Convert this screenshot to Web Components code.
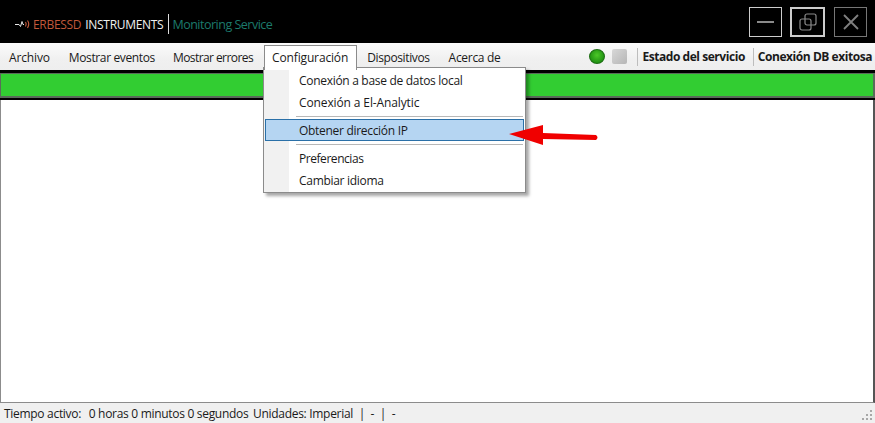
<!DOCTYPE html>
<html lang="es">
<head>
<meta charset="utf-8">
<title>Monitoring Service</title>
<style>
  html, body { margin: 0; padding: 0; background: #fff; }
  body { font-family: "Open Sans", "Noto Sans", sans-serif; font-size: 12px; letter-spacing: -0.3px; overflow: hidden; }
</style>
</head>
<body>
<monitor-app></monitor-app>

<script>
// barra de título
class TitleBar extends HTMLElement {
  constructor() {
    super();
    this.attachShadow({ mode: 'open' });
    this.shadowRoot.innerHTML = `
      <style>
        :host { display: flex; align-items: center; height: 43px; background: #000; padding: 5px 8px 0 15px; box-sizing: border-box; }
        .logo { display: flex; align-items: center; font-size: 12px; flex: 1; }
        .logo svg { margin-right: 2px; }
        .brand { color: #c2583a; }
        .inst { color: #f0f0f0; margin-left: 4px; }
        .divider { width: 1px; height: 20px; background: #ddd; margin: 0 3px 0 5px; }
        .service { color: #1c7a6c; font-size: 12.5px; letter-spacing: -0.5px; }
        .btns { display: flex; margin-top: -4px; }
        .btn { width: 33px; height: 30px; box-sizing: border-box; border: 1px solid #ccc; display: flex; align-items: center; justify-content: center; }
        .btn.restore { border: 2px solid #ccc; width: 35px; margin: 0 9px 0 8px; }
        .btn.close { border-color: #777; }
      </style>
      <div class="logo">
        <svg width="16" height="10" viewBox="0 0 16 10" fill="none">
          <path d="M0 5.5H4L5.5 7.5L7 2.5L8 5.5H9" stroke="#e8e8e8" stroke-width="1"/>
          <path d="M10.5 3Q12 5 10.5 7.5M12.5 1.5Q15 5 12.5 9" stroke="#c2583a" stroke-width="1.2"/>
        </svg>
        <span class="brand">ERBESSD</span>
        <span class="inst">INSTRUMENTS</span>
        <span class="divider"></span>
        <span class="service">Monitoring Service</span>
      </div>
      <div class="btns">
        <div class="btn">
          <svg width="17" height="4" viewBox="0 0 17 4"><rect y="1" width="17" height="2" fill="#8a8a8a"/></svg>
        </div>
        <div class="btn restore">
          <svg width="18" height="18" viewBox="0 0 18 18" fill="none" stroke="#8a8a8a" stroke-width="1.2">
            <rect x="6" y="1" width="11" height="11" rx="2"/>
            <rect x="1" y="6" width="11" height="11" rx="2"/>
          </svg>
        </div>
        <div class="btn close">
          <svg width="16" height="16" viewBox="0 0 16 16" fill="none" stroke="#808080" stroke-width="1.8">
            <path d="M1 1L15 15M15 1L1 15"/>
          </svg>
        </div>
      </div>
    `;
  }
}

// barra de menú
class MenuBar extends HTMLElement {
  constructor() {
    super();
    this.attachShadow({ mode: 'open' });
    this.shadowRoot.innerHTML = `
      <style>
        :host { display: flex; align-items: stretch; height: 27px; background: linear-gradient(#fbfbfb, #f0f0f0 60%, #eeeeee); color: #1a1a1a; font-size: 12px; box-sizing: border-box; padding: 2px 3px 0 1px; }
        .items { display: flex; flex: 1; }
        .status { display: flex; align-items: center; font-weight: 700; font-size: 12px; height: 23px; letter-spacing: -0.45px; }
        .led { width: 16px; height: 15px; border-radius: 50%; background: radial-gradient(circle at 50% 40%, #4cc828, #1f8f12 75%); border: 1px solid #1c6d12; box-sizing: border-box; margin-right: 7px; }
        .stop { width: 15px; height: 15px; background: linear-gradient(135deg, #d8d8d8, #b6b6b6); border-radius: 2px; margin-right: 10px; }
        .sep { width: 1px; height: 18px; background: #bdbdbd; margin-right: 4px; }
        .sep.second { margin-left: 8px; }
      </style>
      <div class="items"><slot></slot></div>
      <div class="status">
        <span class="led"></span>
        <span class="stop"></span>
        <span class="sep"></span>
        <span>Estado del servicio</span>
        <span class="sep second"></span>
        <span>Conexión DB exitosa</span>
      </div>
    `;
  }
}

class MenuItem extends HTMLElement {
  constructor() {
    super();
    this.attachShadow({ mode: 'open' });
    this.shadowRoot.innerHTML = `
      <style>
        :host { display: flex; align-items: center; box-sizing: border-box; height: 23px; margin-top: 1px; padding: 0 8px; margin-right: 3px; white-space: nowrap; }
        :host([open]) { background: #fff; border: 1px solid #8b8b8b; border-bottom: 0; height: 25px; margin-top: 0; padding: 0 8px 2px 7px; margin-right: 2px; position: relative; z-index: 3; }
      </style>
      <slot></slot>
    `;
  }
}

// menú desplegable
class DropMenu extends HTMLElement {
  constructor() {
    super();
    this.attachShadow({ mode: 'open' });
    this.shadowRoot.innerHTML = `
      <style>
        :host { display: block; position: absolute; left: 263px; top: 67px; width: 263px; height: 126px; box-sizing: border-box; background: linear-gradient(90deg, #f1f1f1 0, #f1f1f1 25px, #fff 25px); border: 1px solid #8b8b8b; box-shadow: 3px 3px 3px rgba(0,0,0,.35); padding: 1px 1px; z-index: 2; font-size: 12px; color: #1a1a1a; }
      </style>
      <slot></slot>
    `;
  }
}

class DropItem extends HTMLElement {
  constructor() {
    super();
    this.attachShadow({ mode: 'open' });
    this.shadowRoot.innerHTML = `
      <style>
        :host { display: flex; align-items: center; height: 22px; box-sizing: border-box; padding-left: 34px; white-space: nowrap; }
        :host([active]) { background: #b5d5f2; border: 1px solid #2a70a8; padding-left: 33px; }
      </style>
      <slot></slot>
    `;
  }
}

class DropSep extends HTMLElement {
  constructor() {
    super();
    this.attachShadow({ mode: 'open' });
    this.shadowRoot.innerHTML = `
      <style>
        :host { display: block; height: 1px; margin: 3px 1px 2px 31px; background: #b8b8b8; }
      </style>
    `;
  }
}

class StatusBar extends HTMLElement {
  constructor() {
    super();
    this.attachShadow({ mode: 'open' });
    this.shadowRoot.innerHTML = `
      <style>
        :host { display: flex; align-items: center; height: 20px; background: #f0f0f0; color: #1a1a1a; font-size: 12px; padding-left: 4px; box-sizing: border-box; position: relative; }
        .text { white-space: pre; }
        svg { position: absolute; right: 2px; bottom: 2px; }
      </style>
      <span class="text"><slot></slot></span>
      <svg width="12" height="12" viewBox="0 0 12 12" fill="#a8a8a8">
        <rect x="9" y="1" width="2" height="2"/>
        <rect x="5" y="5" width="2" height="2"/><rect x="9" y="5" width="2" height="2"/>
        <rect x="1" y="9" width="2" height="2"/><rect x="5" y="9" width="2" height="2"/><rect x="9" y="9" width="2" height="2"/>
      </svg>
    `;
  }
}

class MonitorApp extends HTMLElement {
  constructor() {
    super();
    this.attachShadow({ mode: 'open' });
    this.shadowRoot.innerHTML = `
      <style>
        :host { display: flex; flex-direction: column; width: 875px; height: 423px; position: relative; overflow: hidden; }
        .strip { height: 30px; background: #000; padding: 3px 0 2px; box-sizing: border-box; flex: none; }
        .green { height: 100%; background: #32cd32; border: 2px solid #5a6b5a; border-width: 1px 2px 2px 1px; box-sizing: border-box; }
        .content { flex: 1; background: #fff; border: 1px solid #8c8c8c; border-top: 0; border-right: 2px solid #555; }
        .arrow { position: absolute; left: 508px; top: 122px; z-index: 4; }
      </style>
      <title-bar></title-bar>
      <menu-bar>
        <menu-item style="letter-spacing:-0.15px">Archivo</menu-item>
        <menu-item style="letter-spacing:-0.37px;margin-right:2px">Mostrar eventos</menu-item>
        <menu-item style="letter-spacing:-0.57px">Mostrar errores</menu-item>
        <menu-item open style="letter-spacing:-0.15px">Configuración</menu-item>
        <menu-item style="letter-spacing:-0.38px">Dispositivos</menu-item>
        <menu-item>Acerca de</menu-item>
      </menu-bar>
      <div class="strip"><div class="green"></div></div>
      <div class="content"></div>
      <status-bar>Tiempo activo:  <span style="margin-left:2px">0 horas 0 minutos 0 segundos</span>  <span style="margin-left:-1px">Unidades: Imperial  |  -  |  -</span></status-bar>
      <drop-menu>
        <drop-item>Conexión a base de datos local</drop-item>
        <drop-item style="letter-spacing:-0.12px">Conexión a El-Analytic</drop-item>
        <drop-sep></drop-sep>
        <drop-item active>Obtener dirección IP</drop-item>
        <drop-sep></drop-sep>
        <drop-item style="letter-spacing:-0.45px">Preferencias</drop-item>
        <drop-item>Cambiar idioma</drop-item>
      </drop-menu>
      <svg class="arrow" width="92" height="28" viewBox="0 0 92 28">
        <path d="M1 12L35 3L35 11L88 13Q91 15.5 88 18L35 17L35 23Z" fill="#f00000"/>
      </svg>
    `;
  }
}

customElements.define('title-bar', TitleBar);
customElements.define('menu-bar', MenuBar);
customElements.define('menu-item', MenuItem);
customElements.define('drop-menu', DropMenu);
customElements.define('drop-item', DropItem);
customElements.define('drop-sep', DropSep);
customElements.define('status-bar', StatusBar);
customElements.define('monitor-app', MonitorApp);
</script>
</body>
</html>
